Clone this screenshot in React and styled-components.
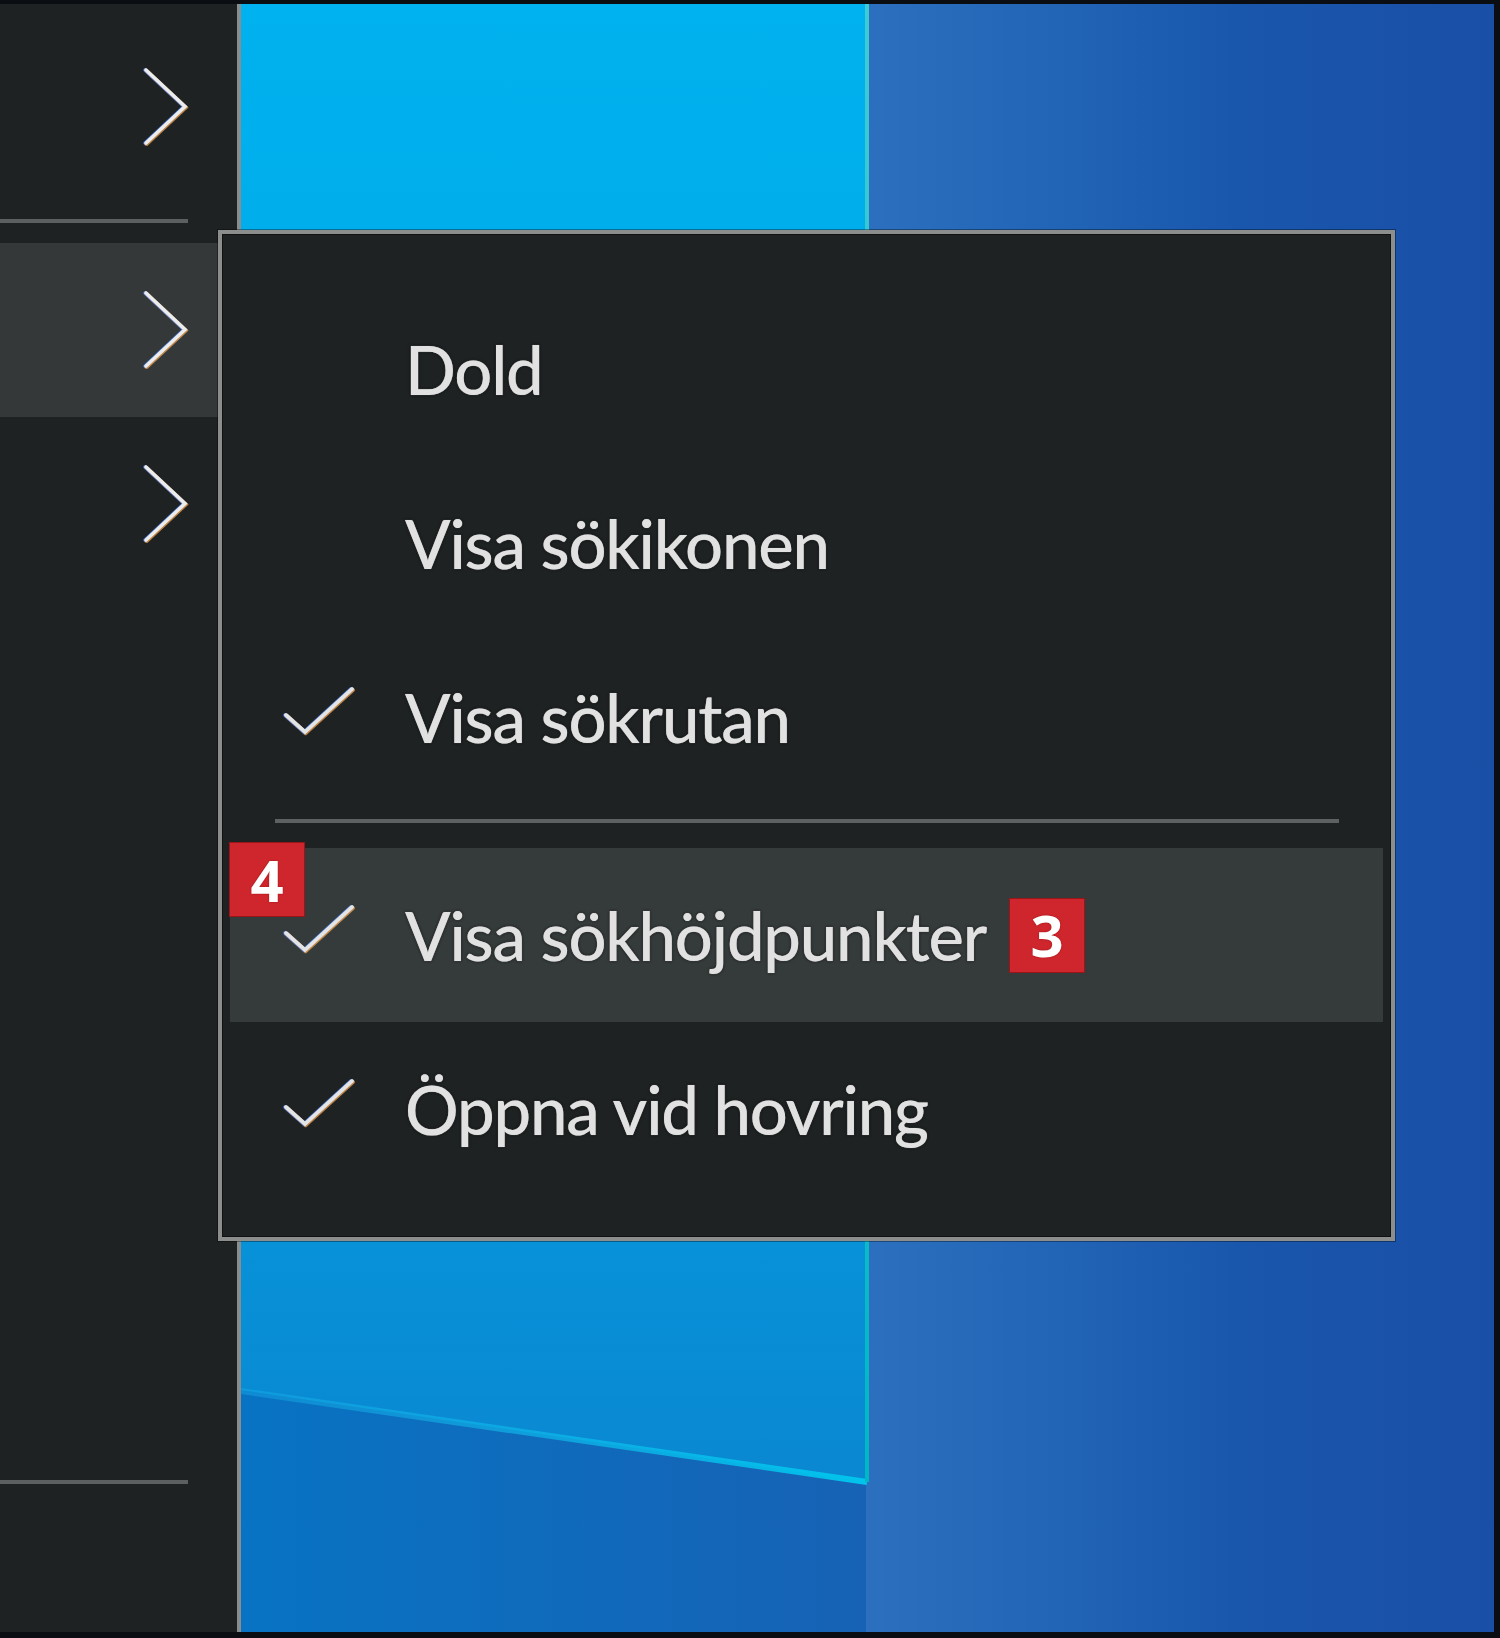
import React from "react";
import styled, { createGlobalStyle } from "styled-components";

const GlobalStyle = createGlobalStyle`
  html, body { margin: 0; padding: 0; background: #1f2223; }
  *, *::before, *::after { box-sizing: border-box; }
`;

const Screen = styled.div`
  position: relative;
  width: 1500px;
  height: 1638px;
  display: flex;
  overflow: hidden;
  background: #0a0d12;
  border-style: solid;
  border-color: #0a0d12;
  border-width: 4px 6px 6px 0;
  font-family: "Lato", "Open Sans", sans-serif;
`;

const SidePanel = styled.nav`
  width: 241px;
  flex: none;
  display: flex;
  flex-direction: column;
  background: #1f2223;
  border-right: 4px solid #8a8d8e;
  padding: 16px 0 148px;
`;

const NavRow = styled.div`
  height: 174px;
  display: flex;
  align-items: center;
  justify-content: flex-end;
  padding-right: 49px;
  background: ${(p) => (p.$active ? "#343839" : "transparent")};
`;

const NavDivider = styled.div`
  width: 188px;
  height: 4px;
  background: #5d6061;
  margin: ${(p) => p.$margin || "0"};
`;

const Desktop = styled.main`
  flex: 1;
  min-width: 0;
  display: flex;
  svg {
    display: block;
    width: 100%;
    height: 100%;
  }
`;

const Flyout = styled.div`
  position: absolute;
  left: 218px;
  top: 226px;
  width: 1177px;
  height: 1011px;
  border: 4px solid #8c8e8e;
  background: #1e2223;
  padding: 48px 8px 41px;
  display: flex;
  flex-direction: column;
  box-shadow: 0 0 0 1px rgba(0, 0, 0, 0.35), inset 0 0 0 1px #0f1112;
`;

const MenuRow = styled.div`
  position: relative;
  height: 174px;
  flex: none;
  display: flex;
  align-items: center;
  padding-left: 54px;
  background: ${(p) => (p.$highlight ? "#353a3b" : "transparent")};
`;

const CheckSlot = styled.div`
  width: 121px;
  flex: none;
  display: flex;
  align-items: center;
  svg {
    margin-bottom: 12px;
  }
`;

const Label = styled.span`
  font-size: 67px;
  font-weight: 500;
  line-height: 1;
  color: #e1e1e1;
  white-space: nowrap;
  letter-spacing: -1.2px;
  text-shadow: 0 0 1px rgba(225, 225, 225, 0.7), 0 0 3px rgba(0, 0, 0, 0.9);
`;

const Badge = styled.span`
  width: 76px;
  height: 75px;
  flex: none;
  display: flex;
  align-items: center;
  justify-content: center;
  background: #cf262d;
  color: #ffffff;
  font-family: "Open Sans", "Liberation Sans", sans-serif;
  font-weight: 700;
  font-size: 58px;
  line-height: 1;
  box-shadow: inset 0 0 0 1px rgba(90, 0, 0, 0.45);
  text-shadow: 0 0 2px rgba(120, 0, 0, 0.6);
`;

const InlineBadge = styled(Badge)`
  margin-left: 23px;
`;

const CornerBadge = styled(Badge)`
  position: absolute;
  left: -1px;
  top: -6px;
`;

const MenuDivider = styled.div`
  height: 4px;
  flex: none;
  margin: 15px 44px 25px 45px;
  background: #5e6162;
`;

const aberration =
  "drop-shadow(-1px 0 0 rgba(70,130,255,0.75)) drop-shadow(1px 1px 0 rgba(255,170,80,0.7))";

function Chevron() {
  return (
    <svg width="44" height="79" viewBox="0 0 44 79" style={{ filter: aberration }}>
      <polyline
        points="2,2 41,38.5 2,75"
        fill="none"
        stroke="#ececec"
        strokeWidth="3.6"
        strokeLinecap="round"
        strokeLinejoin="miter"
      />
    </svg>
  );
}

function Check() {
  return (
    <svg width="72" height="50" viewBox="0 0 72 50" style={{ filter: aberration }}>
      <polyline
        points="2,29 21,46 68,3"
        fill="none"
        stroke="#e4e4e4"
        strokeWidth="3.8"
        strokeLinecap="round"
        strokeLinejoin="miter"
      />
    </svg>
  );
}

function Wallpaper() {
  return (
    <svg viewBox="0 0 1253 1628" preserveAspectRatio="none">
      <defs>
        <linearGradient id="base" x1="0" y1="0" x2="1" y2="0">
          <stop offset="0" stopColor="#0873c3" />
          <stop offset="0.5" stopColor="#1762b5" />
          <stop offset="1" stopColor="#1a4fa6" />
        </linearGradient>
        <linearGradient id="glowRight" x1="625" y1="0" x2="1000" y2="0" gradientUnits="userSpaceOnUse">
          <stop offset="0" stopColor="#4a84cc" stopOpacity="0.4" />
          <stop offset="1" stopColor="#4a84cc" stopOpacity="0" />
        </linearGradient>
        <linearGradient id="pane" x1="0" y1="0" x2="0" y2="1">
          <stop offset="0" stopColor="#00b2ef" />
          <stop offset="0.55" stopColor="#02a2e4" />
          <stop offset="1" stopColor="#0a88d1" />
        </linearGradient>
        <linearGradient id="edge" x1="0" y1="1386" x2="625" y2="1476" gradientUnits="userSpaceOnUse">
          <stop offset="0" stopColor="#19b6ee" stopOpacity="0.35" />
          <stop offset="1" stopColor="#00c8ee" stopOpacity="0.95" />
        </linearGradient>
        <linearGradient id="teal" x1="0" y1="0" x2="0" y2="1">
          <stop offset="0" stopColor="#3fcbd6" />
          <stop offset="1" stopColor="#00b7c6" />
        </linearGradient>
      </defs>
      <rect x="0" y="0" width="1253" height="1628" fill="url(#base)" />
      <rect x="625" y="0" width="628" height="1628" fill="url(#glowRight)" />
      <polygon points="0,0 626,0 626,1478 0,1386" fill="url(#pane)" />
      <line x1="0" y1="1387" x2="626" y2="1478" stroke="url(#edge)" strokeWidth="6" />
      <rect x="624" y="0" width="4" height="1478" fill="url(#teal)" />
    </svg>
  );
}

const items = [
  { label: "Dold", checked: false },
  { label: "Visa sökikonen", checked: false },
  { label: "Visa sökrutan", checked: true },
];

const items2 = [
  { label: "Visa sökhöjdpunkter", checked: true, highlight: true, badge: "3", corner: "4" },
  { label: "Öppna vid hovring", checked: true },
];

function Item({ item }) {
  return (
    <MenuRow $highlight={item.highlight}>
      {item.corner && <CornerBadge>{item.corner}</CornerBadge>}
      <CheckSlot>{item.checked && <Check />}</CheckSlot>
      <Label>{item.label}</Label>
      {item.badge && <InlineBadge>{item.badge}</InlineBadge>}
    </MenuRow>
  );
}

export default function App() {
  return (
    <>
      <GlobalStyle />
      <Screen>
        <SidePanel>
          <NavRow>
            <Chevron />
          </NavRow>
          <NavDivider $margin="25px 0 20px" />
          <NavRow $active>
            <Chevron />
          </NavRow>
          <NavRow>
            <Chevron />
          </NavRow>
          <NavDivider $margin="auto 0 0" />
        </SidePanel>
        <Desktop>
          <Wallpaper />
        </Desktop>
        <Flyout>
          {items.map((it) => (
            <Item key={it.label} item={it} />
          ))}
          <MenuDivider />
          {items2.map((it) => (
            <Item key={it.label} item={it} />
          ))}
        </Flyout>
      </Screen>
    </>
  );
}
